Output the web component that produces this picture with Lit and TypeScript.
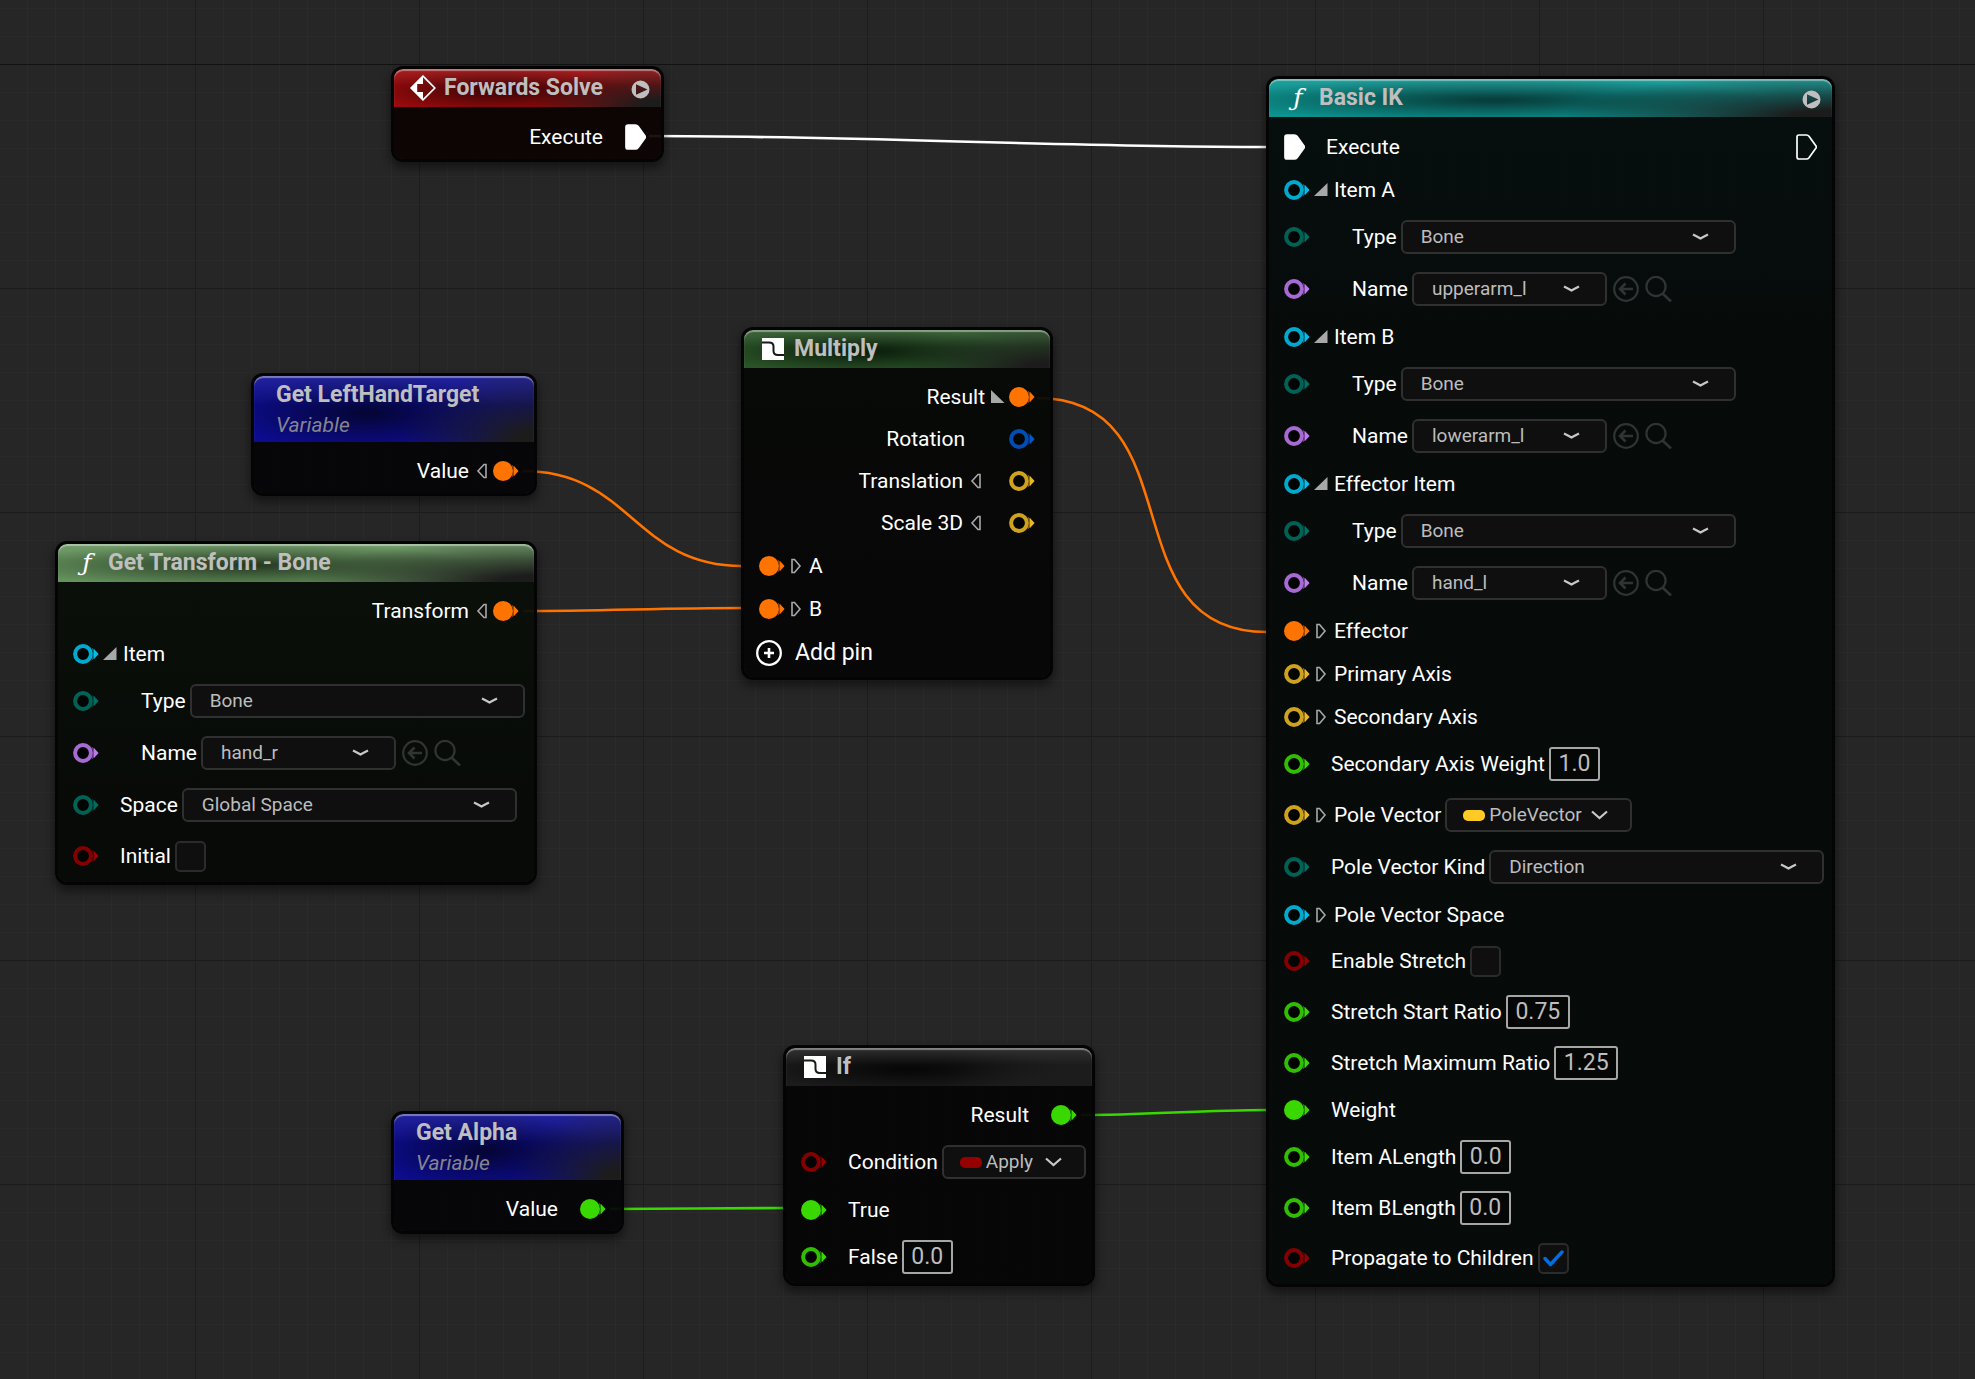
import { LitElement, html, svg, css, nothing } from "lit";
import { customElement } from "lit/decorators.js";
import { classMap } from "lit/directives/class-map.js";

type Expand = "open" | "closed";

interface Row {
  label: string;
  pin: string;
  side?: "out";
  linked?: boolean;
  expand?: Expand;
  child?: boolean;
  passThrough?: boolean;
  select?: string;
  selectSize?: "wide" | "name" | "pole" | "apply";
  picker?: boolean;
  number?: string;
  checkbox?: boolean;
  checked?: boolean;
}

interface GraphNode {
  id: string;
  title: string;
  subtitle?: string;
  icon?: "event" | "function" | "template";
  tint: string;
  runnable?: boolean;
  addPin?: boolean;
  rows: Row[];
}

interface Wire {
  from: [number, number];
  to: [number, number];
  kind: string;
}

const boneItem = (label: string, name: string): Row[] => [
  { label, pin: "item", expand: "open" },
  { label: "Type", pin: "enum", child: true, select: "Bone", selectSize: "wide" },
  { label: "Name", pin: "name", child: true, select: name, selectSize: "name", picker: true },
];

const NODES: GraphNode[] = [
  {
    id: "solve",
    title: "Forwards Solve",
    icon: "event",
    tint: "red",
    runnable: true,
    rows: [{ label: "Execute", pin: "exec", side: "out", linked: true }],
  },
  {
    id: "target",
    title: "Get LeftHandTarget",
    subtitle: "Variable",
    tint: "blue",
    rows: [{ label: "Value", pin: "transform", side: "out", linked: true, expand: "closed" }],
  },
  {
    id: "bone",
    title: "Get Transform - Bone",
    icon: "function",
    tint: "sage",
    rows: [
      { label: "Transform", pin: "transform", side: "out", linked: true, expand: "closed" },
      ...boneItem("Item", "hand_r"),
      { label: "Space", pin: "enum", select: "Global Space", selectSize: "wide" },
      { label: "Initial", pin: "bool", checkbox: true },
    ],
  },
  {
    id: "multiply",
    title: "Multiply",
    icon: "template",
    tint: "forest",
    addPin: true,
    rows: [
      { label: "Result", pin: "transform", side: "out", linked: true, expand: "open" },
      { label: "Rotation", pin: "quat", side: "out", child: true },
      { label: "Translation", pin: "vector", side: "out", child: true, expand: "closed" },
      { label: "Scale 3D", pin: "vector", side: "out", child: true, expand: "closed" },
      { label: "A", pin: "transform", linked: true, expand: "closed" },
      { label: "B", pin: "transform", linked: true, expand: "closed" },
    ],
  },
  {
    id: "ik",
    title: "Basic IK",
    icon: "function",
    tint: "teal",
    runnable: true,
    rows: [
      { label: "Execute", pin: "exec", linked: true, passThrough: true },
      ...boneItem("Item A", "upperarm_l"),
      ...boneItem("Item B", "lowerarm_l"),
      ...boneItem("Effector Item", "hand_l"),
      { label: "Effector", pin: "transform", linked: true, expand: "closed" },
      { label: "Primary Axis", pin: "vector", expand: "closed" },
      { label: "Secondary Axis", pin: "vector", expand: "closed" },
      { label: "Secondary Axis Weight", pin: "float", number: "1.0" },
      { label: "Pole Vector", pin: "vector", expand: "closed", select: "PoleVector", selectSize: "pole" },
      { label: "Pole Vector Kind", pin: "enum", select: "Direction", selectSize: "wide" },
      { label: "Pole Vector Space", pin: "item", expand: "closed" },
      { label: "Enable Stretch", pin: "bool", checkbox: true },
      { label: "Stretch Start Ratio", pin: "float", number: "0.75" },
      { label: "Stretch Maximum Ratio", pin: "float", number: "1.25" },
      { label: "Weight", pin: "float", linked: true },
      { label: "Item ALength", pin: "float", number: "0.0" },
      { label: "Item BLength", pin: "float", number: "0.0" },
      { label: "Propagate to Children", pin: "bool", checkbox: true, checked: true },
    ],
  },
  {
    id: "branch",
    title: "If",
    icon: "template",
    tint: "gray",
    rows: [
      { label: "Result", pin: "float", side: "out", linked: true },
      { label: "Condition", pin: "bool", select: "Apply", selectSize: "apply" },
      { label: "True", pin: "float", linked: true },
      { label: "False", pin: "float", number: "0.0" },
    ],
  },
  {
    id: "alpha",
    title: "Get Alpha",
    subtitle: "Variable",
    tint: "blue",
    rows: [{ label: "Value", pin: "float", side: "out", linked: true }],
  },
];

const WIRES: Wire[] = [
  { from: [649, 136], to: [1267, 147], kind: "exec" },
  { from: [523, 471], to: [742, 566], kind: "transform" },
  { from: [523, 611], to: [742, 608], kind: "transform" },
  { from: [1037, 398], to: [1267, 632], kind: "transform" },
  { from: [610, 1209], to: [784, 1208], kind: "float" },
  { from: [1081, 1115], to: [1267, 1110], kind: "float" },
];

/* Horizontal-tangent cubic whose handles grow with the distance covered. */
const wirePath = ({ from: [x1, y1], to: [x2, y2] }: Wire) => {
  const reach = Math.round((Math.abs(x2 - x1) + Math.abs(y2 - y1)) * 0.345);
  return `M${x1} ${y1}C${x1 + reach} ${y1} ${x2 - reach} ${y2} ${x2} ${y2}`;
};

@customElement("app-root")
export class AppRoot extends LitElement {
  static styles = css`
    :host {
      display: block;
      font-family: Roboto, "Liberation Sans", sans-serif;
      font-size: 21px;
      color: #fff;
    }
    *,
    *::before,
    *::after {
      box-sizing: border-box;
    }
    svg {
      display: block;
      flex: none;
    }
    .canvas {
      position: relative;
      min-height: 100vh;
      overflow: hidden;
      background-color: #262626;
      background-image: linear-gradient(#121212, #121212), linear-gradient(#1b1b1b 1px, transparent 1px),
        linear-gradient(90deg, #1d1d1d 1px, transparent 1px), linear-gradient(#2a2a2a 1px, transparent 1px),
        linear-gradient(90deg, #2a2a2a 1px, transparent 1px);
      background-size: 100% 1px, 224px 224px, 224px 224px, 28px 28px, 28px 28px;
      background-position: 0 64px, 195px 64px, 195px 64px, 27px 8px, 27px 8px;
      background-repeat: no-repeat, repeat, repeat, repeat, repeat;
    }
    .wires {
      position: absolute;
      inset: 0;
      width: 100%;
      height: 100%;
      fill: none;
      stroke: currentColor;
      stroke-width: 2.6;
    }

    /* Pin colours */
    .exec { color: #fff; }
    .transform { color: #ff7300; }
    .item { color: #00c0ea; }
    .enum { color: #006e61; }
    .name { color: #be78f0; }
    .bool { color: #960000; }
    .float { color: #38d800; }
    .vector { color: #ecb822; }
    .quat { color: #0058cc; }

    /* Nodes */
    .node {
      position: absolute;
      border: 3px solid #040404;
      border-radius: 12px;
      background: linear-gradient(rgba(var(--body-top), 0.93), rgba(var(--body), 0.93) 260px) padding-box;
      box-shadow: 0 5px 10px 1px rgba(0, 0, 0, 0.45);
    }
    .node-solve { left: 391px; top: 66px; width: 273px; }
    .node-target { left: 251px; top: 373px; width: 286px; }
    .node-bone { left: 55px; top: 541px; width: 482px; }
    .node-multiply { left: 741px; top: 327px; width: 312px; }
    .node-ik { left: 1266px; top: 76px; width: 569px; }
    .node-branch { left: 783px; top: 1045px; width: 312px; }
    .node-alpha { left: 391px; top: 1111px; width: 233px; }

    .red { --tint: #980a0c; --mid: #3c0506; --body-top: 12, 2, 2; --body: 7, 5, 3; }
    .blue { --tint: #0c0c90; --mid: #050538; --body-top: 4, 4, 8; --body: 4, 4, 7; }
    .sage { --tint: #64915c; --mid: #283c24; --body-top: 8, 15, 7; --body: 5, 8, 5; }
    .forest { --tint: #2a5428; --mid: #0c1e0c; --body-top: 5, 8, 4; --body: 5, 5, 5; }
    .teal { --tint: #0c9490; --mid: #083e3c; --body-top: 4, 14, 13; --body: 4, 9, 8; }
    .gray { --tint: #1c1c1c; --mid: #070707; --body-top: 4, 4, 4; --body: 4, 4, 4; }

    .header {
      display: flex;
      align-items: flex-start;
      gap: 8px;
      height: 38px;
      padding: 0 11px 0 16px;
      border-radius: 9px 9px 0 0;
      background: linear-gradient(rgba(255, 255, 255, 0.09), transparent 45%),
        radial-gradient(ellipse 48% 115% at 100% 100%, #1c1c1c 15%, transparent 100%),
        radial-gradient(ellipse 50% 58% at 40% 56%, var(--mid) 5%, transparent 100%), var(--tint);
      box-shadow: inset 0 2px 1px rgba(255, 255, 255, 0.4);
    }
    .header.tall {
      height: 66px;
      padding-left: 22px;
    }
    .titles {
      flex: 1;
    }
    .title {
      margin: 0;
      font-size: 23px;
      line-height: 37px;
      font-weight: 700;
      color: #bfbfbf;
      white-space: nowrap;
    }
    .subtitle {
      margin: 0;
      font-size: 21px;
      line-height: 24px;
      font-style: italic;
      color: #85858f;
    }
    .type-icon {
      display: grid;
      place-items: center;
      width: 26px;
      height: 37px;
      color: #fff;
      font: italic 400 25px/30px "DejaVu Serif", serif;
    }
    .run {
      height: 40px;
      padding: 0;
      border: 0;
      background: none;
      color: #bfbfbf;
    }

    .body {
      display: flex;
      flex-direction: column;
      padding: 8px 15px 1px;
    }
    .row {
      display: flex;
      align-items: center;
      height: 43px;
      white-space: nowrap;
    }
    .row.out {
      flex-direction: row-reverse;
      height: 42px;
    }
    .row.is-exec { height: 43px; }
    .row.has-select { height: 52px; }
    .row.has-number { height: 51px; }
    .row.has-check { height: 50px; }
    .space,
    .indent {
      flex: none;
      width: 21px;
    }
    .out .space,
    .out .indent {
      width: 22px;
    }
    .expander {
      display: grid;
      flex: none;
      margin: 0 6px 0 4px;
      padding: 0;
      border: 0;
      background: none;
      color: #a8a8a8;
    }
    .out .expander {
      margin: 0 4px 0 6px;
    }
    .pass {
      margin-left: auto;
    }

    /* Controls */
    .field {
      display: grid;
      align-items: center;
      margin-left: 4px;
    }
    .field > * {
      grid-area: 1 / 1;
    }
    .select {
      appearance: none;
      width: 335px;
      height: 34px;
      padding: 0 40px 0 18px;
      border: 2px solid #303030;
      border-radius: 6px;
      background: #0f0f0f;
      color: #bdbdbd;
      font: 19px/24px Roboto, "Liberation Sans", sans-serif;
    }
    .select.size-name { width: 195px; }
    .select.size-pole { width: 187px; padding: 0 24px 0 42px; }
    .select.size-apply { width: 144px; padding: 0 24px 0 42px; }
    .chevron {
      justify-self: end;
      margin-right: 27px;
      color: #c8c8c8;
      pointer-events: none;
    }
    .size-pole ~ .chevron,
    .size-apply ~ .chevron {
      margin-right: 24px;
    }
    .swatch {
      justify-self: start;
      width: 22px;
      height: 11px;
      margin-left: 18px;
      border-radius: 5px;
      background: #ffca23;
      pointer-events: none;
    }
    .swatch.red-swatch { background: #960000; }
    .number {
      width: 51px;
      height: 34px;
      margin-left: 4px;
      padding: 0;
      border: 2px solid #a6a6a6;
      border-radius: 3px;
      background: #050707;
      color: #bdbdbd;
      font: 23px/28px Roboto, "Liberation Sans", sans-serif;
      text-align: center;
    }
    .number.long { width: 64px; }
    .check {
      appearance: none;
      width: 31px;
      height: 31px;
      margin: 0;
      border: 2px solid #2b2b2b;
      border-radius: 5px;
      background: #0f0f0f;
    }
    .tick {
      display: none;
      justify-self: center;
      color: #0070e0;
      pointer-events: none;
    }
    .check:checked ~ .tick { display: block; }
    .tool {
      margin-left: 6px;
      padding: 0;
      border: 0;
      background: none;
      color: #303432;
    }
    .add {
      display: flex;
      align-items: center;
      gap: 13px;
      height: 46px;
      margin: 0 0 0 -3px;
      padding: 0;
      border: 0;
      background: none;
      color: #fff;
      font: 23px/28px Roboto, "Liberation Sans", sans-serif;
    }
  `;

  private pin(kind: string, linked = false, extra = "") {
    if (kind === "exec") {
      return html`<svg class="exec ${extra}" width="21" height="26" viewBox="0 0 21 26" aria-hidden="true">
        <path
          d="M3 1H10.500Q12 1 13 2.200L20 12Q20.600 13 20 14L13 23.800Q12 25 10.500 25H3Q1 25 1 23V3Q1 1 3 1Z"
          fill=${linked ? "currentColor" : "none"}
          stroke="currentColor"
          stroke-width="1.700"
          stroke-linejoin="round"
        />
      </svg>`;
    }
    return html`<svg class=${kind} width="26" height="20" viewBox="0 0 26 20" aria-hidden="true">
      ${linked
        ? svg`<circle cx="10" cy="10" r="10" fill="currentColor" />`
        : svg`<circle cx="10" cy="10" r="7.900" fill="#020404" stroke="currentColor" stroke-opacity=".88" stroke-width="4" />`}
      <path d="M18.500 3.500Q21.500 10 18.500 16.500L21.500 14V6Z" fill="currentColor" opacity=".6" />
      <path d="M21 5L25.600 10L21 15Z" fill="currentColor" />
    </svg>`;
  }

  private expander(row: Row) {
    const out = row.side === "out";
    const shape =
      row.expand === "open"
        ? svg`<path d=${out ? "M0 1V14H13.500Z" : "M13.500 1V14H0Z"} fill="currentColor" />`
        : svg`<path d=${out ? "M11 1.500V14.500H9L3 8L9 1.500Z" : "M3 1.500V14.500H5.500L11 8L5.500 1.500Z"}
            fill="none" stroke="currentColor" stroke-width="1.600" />`;
    return html`<button class="expander" aria-label="Expand ${row.label}" aria-expanded=${row.expand === "open"}>
      <svg width="14" height="16" viewBox="0 0 14 16">${shape}</svg>
    </button>`;
  }

  private control(row: Row, id: string) {
    if (row.select) {
      const bound = row.selectSize === "pole" || row.selectSize === "apply";
      return html`<span class="field">
          <select id=${id} class="select size-${row.selectSize}">
            <option>${row.select}</option>
          </select>
          ${bound
            ? html`<span class=${classMap({ swatch: true, "red-swatch": row.pin === "bool" })}></span>`
            : nothing}
          <svg class="chevron" width="17" height="10" viewBox="0 0 17 10" aria-hidden="true">
            <path
              d=${bound ? "M1 1.500L8.500 8L16 1.500" : "M1 2.500Q5 4.500 8.500 6.500Q12 4.500 16 2.500"}
              fill="none"
              stroke="currentColor"
              stroke-width="2.200"
            />
          </svg>
        </span>
        ${row.picker
          ? html`<button class="tool" aria-label="Use selected ${row.label}">
                <svg width="26" height="26" viewBox="0 0 26 26" fill="none" stroke="currentColor" stroke-width="2.200">
                  <circle cx="13" cy="13" r="11.800" />
                  <path d="M20 13H7.500M12.500 7.500L7 13L12.500 18.500" stroke-width="2.600" />
                </svg></button
              ><button class="tool" aria-label="Browse ${row.label}">
                <svg width="27" height="26" viewBox="0 0 27 26" fill="none" stroke="currentColor" stroke-width="2.200">
                  <circle cx="11" cy="10.500" r="9.600" />
                  <path d="M17.500 17.500L26 25.500" stroke-width="2.600" />
                </svg>
              </button>`
          : nothing}`;
    }
    if (row.number) {
      return html`<input
        id=${id}
        class=${classMap({ number: true, long: row.number.length > 3 })}
        type="text"
        inputmode="decimal"
        .value=${row.number}
      />`;
    }
    return html`<span class="field">
      <input id=${id} class="check" type="checkbox" .checked=${!!row.checked} />
      <svg class="tick" width="21" height="17" viewBox="0 0 21 17" aria-hidden="true">
        <path d="M2 8.500L7.500 14.500L19 2" fill="none" stroke="currentColor" stroke-width="3.400" stroke-linecap="round" stroke-linejoin="round" />
      </svg>
    </span>`;
  }

  private row(row: Row, id: string) {
    const editable = !!(row.select || row.number || row.checkbox);
    const classes = {
      row: true,
      out: row.side === "out",
      "is-exec": row.pin === "exec",
      "has-select": !!row.select,
      "has-number": !!row.number,
      "has-check": !!row.checkbox,
    };
    return html`<div class=${classMap(classes)}>
      ${this.pin(row.pin, row.linked)} ${row.child ? html`<span class="indent"></span>` : nothing}
      ${row.expand ? this.expander(row) : html`<span class="space"></span>`}
      ${editable ? html`<label for=${id}>${row.label}</label>${this.control(row, id)}` : html`<span>${row.label}</span>`}
      ${row.passThrough ? this.pin("exec", false, "pass") : nothing}
    </div>`;
  }

  private typeIcon(icon: GraphNode["icon"]) {
    if (icon === "function") return html`<span class="type-icon" aria-hidden="true">ƒ</span>`;
    if (icon === "event") {
      return html`<span class="type-icon"
        ><svg width="26" height="26" viewBox="0 0 26 26">
          <path d="M13 1.200L24.800 13L13 24.800L1.200 13Z" fill="none" stroke="currentColor" stroke-width="1.700" />
          <path d="M13 .5V9H7.200V17H13V25.500L.5 13Z" fill="currentColor" /></svg
      ></span>`;
    }
    return html`<span class="type-icon"
      ><svg width="22" height="22" viewBox="0 0 22 22">
        <rect width="22" height="22" fill="currentColor" />
        <path d="M0 4.500H7Q11.500 4.500 11.500 8.500V13Q11.500 17 16 17H22" fill="none" stroke="#141c14" stroke-width="2" /></svg
    ></span>`;
  }

  private node(node: GraphNode) {
    return html`<section class="node node-${node.id} ${node.tint}">
      <header class=${classMap({ header: true, tall: !!node.subtitle })}>
        ${node.icon ? this.typeIcon(node.icon) : nothing}
        <div class="titles">
          <h2 class="title">${node.title}</h2>
          ${node.subtitle ? html`<p class="subtitle">${node.subtitle}</p>` : nothing}
        </div>
        ${node.runnable
          ? html`<button class="run" aria-label="Run ${node.title}">
              <svg width="19" height="19" viewBox="0 0 19 19">
                <path
                  fill="currentColor"
                  fill-rule="evenodd"
                  d="M9.500 .500A9 9 0 1 1 9.500 18.500A9 9 0 1 1 9.500 .500ZM5 4.300V14.700L16.500 9.500Z"
                />
              </svg>
            </button>`
          : nothing}
      </header>
      <div class="body">
        ${node.rows.map((row, i) => this.row(row, `${node.id}-${i}`))}
        ${node.addPin
          ? html`<button class="add">
              <svg width="26" height="26" viewBox="0 0 26 26" fill="none" stroke="currentColor">
                <circle cx="13" cy="13" r="11.800" stroke-width="2.300" />
                <path d="M13 8V18M8 13H18" stroke-width="2.600" />
              </svg>
              Add pin
            </button>`
          : nothing}
      </div>
    </section>`;
  }

  render() {
    return html`<main class="canvas">
      <svg class="wires" aria-hidden="true">
        ${WIRES.map((wire) => svg`<path class=${wire.kind} stroke="currentColor" d=${wirePath(wire)} />`)}
      </svg>
      ${NODES.map((node) => this.node(node))}
    </main>`;
  }
}
